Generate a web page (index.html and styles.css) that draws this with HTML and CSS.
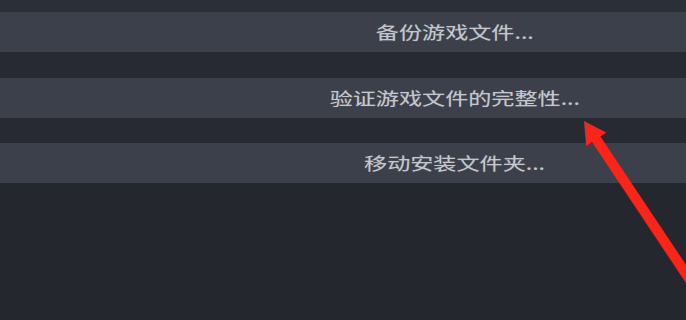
FILE: index.html
```html
<!DOCTYPE html>
<html lang="zh-CN">
<head>
<meta charset="utf-8">
<title>Steam 本地文件</title>
<link rel="stylesheet" href="styles.css">
</head>
<body>
<div class="page">
  <div class="top-strip"></div>
  <div class="menu">
    <div class="item"><span class="label">备份游戏文件...</span></div>
    <div class="item"><span class="label">验证游戏文件的完整性...</span></div>
    <div class="item"><span class="label">移动安装文件夹...</span></div>
  </div>
  <svg class="arrow" width="686" height="320" viewBox="0 0 686 320" xmlns="http://www.w3.org/2000/svg">
    <polygon points="584,121 606.2,132.6 600.4,136.5 754.7,367.8 746.3,373.4 592,142.1 586.2,146" fill="#fb2419"/>
  </svg>
</div>
</body>
</html>
```

FILE: styles.css
```css
html, body {
  margin: 0;
  padding: 0;
  background: #24272e;
}

.page {
  position: relative;
  width: 686px;
  height: 320px;
  overflow: hidden;
  background: #24272e;
  font-family: "Noto Sans CJK SC", "Noto Sans", sans-serif;
}

.top-strip {
  height: 12px;
  background: #2b2f38;
}

.menu {
  display: flex;
  flex-direction: column;
  gap: 25.5px;
  background: #272a32;
}

.item {
  height: 40px;
  display: flex;
  align-items: center;
  justify-content: center;
  padding-left: 224px;
  background: #3b404b;
}

.label {
  display: inline-block;
  font-size: 17.5px;
  line-height: 1;
  color: #c4c8cd;
  transform: scaleX(1.32);
  transform-origin: center;
  white-space: nowrap;
  text-shadow: 0 0 1px rgba(200, 205, 210, 0.4);
}

.arrow {
  position: absolute;
  left: 0;
  top: 0;
}
```
